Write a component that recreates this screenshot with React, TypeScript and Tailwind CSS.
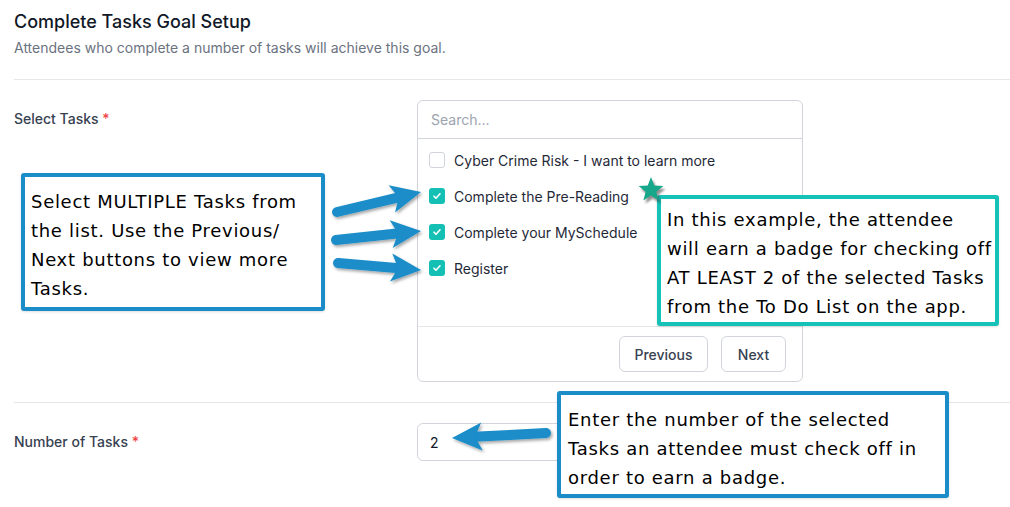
import React from "react"

type Pt = [number, number]

const tasks = [
	{ label: "Cyber Crime Risk - I want to learn more", checked: false },
	{ label: "Complete the Pre-Reading", checked: true },
	{ label: "Complete your MySchedule", checked: true },
	{ label: "Register", checked: true },
]

const arrows: { tail: Pt; tip: Pt }[] = [
	{ tail: [337, 212], tip: [421, 192] },
	{ tail: [336, 240], tip: [421, 231] },
	{ tail: [338, 263], tip: [421, 270] },
	{ tail: [546, 433], tip: [452, 438] },
]

// shaft + head for one callout arrow
const Arrow = ({ tail, tip }: { tail: Pt; tip: Pt }) => {
	const dx = tip[0] - tail[0]
	const dy = tip[1] - tail[1]
	const len = Math.hypot(dx, dy)
	const ux = dx / len
	const uy = dy / len
	const head = 26
	const half = 14
	const nx = tip[0] - ux * head
	const ny = tip[1] - uy * head
	const bx = tip[0] - ux * (head + 4)
	const by = tip[1] - uy * (head + 4)
	const pts = [
		[tip[0], tip[1]],
		[bx - uy * half, by + ux * half],
		[nx + ux * 3, ny + uy * 3],
		[bx + uy * half, by - ux * half],
	]
		.map((p) => p.join(","))
		.join(" ")
	return (
		<g>
			<line
				x1={tail[0]}
				y1={tail[1]}
				x2={nx + ux * 4}
				y2={ny + uy * 4}
				stroke="#1a8dc9"
				strokeWidth={10}
				strokeLinecap="round"
			/>
			<polygon points={pts} fill="#1a8dc9" strokeLinejoin="round" />
		</g>
	)
}

const starPoints = (cx: number, cy: number, r: number, ri: number) => {
	const out: string[] = []
	for (let i = 0; i < 10; i++) {
		const a = -Math.PI / 2 + (i * Math.PI) / 5
		const rr = i % 2 === 0 ? r : ri
		out.push(`${cx + Math.cos(a) * rr},${cy + Math.sin(a) * rr}`)
	}
	return out.join(" ")
}

const Check = ({ checked }: { checked: boolean }) =>
	checked ? (
		<span className="flex h-4 w-4 items-center justify-center rounded-[3px] bg-[#14bfb4]">
			<svg width="10" height="10" viewBox="0 0 10 10" fill="none">
				<path d="M2 5.2l2 2 4-4.4" stroke="white" strokeWidth="1.6" strokeLinecap="round" strokeLinejoin="round" />
			</svg>
		</span>
	) : (
		<span className="h-4 w-4 rounded-[3px] border border-[#d1d5db] bg-white" />
	)

const callout =
	"absolute rounded-[3px] border-4 bg-white font-[DejaVu_Sans,Verdana,sans-serif] text-[18px] tracking-[0.7px] leading-[29px] text-black shadow-sm"

export default function App() {
	return (
		<div className="relative h-[507px] w-[1010px] overflow-hidden bg-white pl-[14px] font-[Inter,sans-serif]">
			<div className="pt-2">
				<h1 className="text-[18px] leading-7 font-medium text-[#111827]">Complete Tasks Goal Setup</h1>
				<p className="mt-[2px] text-[14px] leading-5 text-[#6b7280]">
					Attendees who complete a number of tasks will achieve this goal.
				</p>
			</div>
			<div className="mt-[21px] border-t border-[#e5e7eb]" />

			<div className="flex pt-[20px]">
				<div className="w-[403px] pt-[9px] text-[14px] leading-5 font-medium text-[#374151]">
					Select Tasks <span className="text-[#ef4444]">*</span>
				</div>
				<div className="w-[386px] rounded-md border border-[#d1d5db]">
					<div className="flex h-[38px] items-center border-b border-[#d1d5db] px-[13px] text-[14px] text-[#9ca3af]">
						Search...
					</div>
					<div className="h-[188px] border-b border-[#e5e7eb] pt-[3px]">
						{tasks.map((t) => (
							<div key={t.label} className="flex h-9 items-center gap-[9px] pl-[11px] text-[14px] text-[#1f2937]">
								<Check checked={t.checked} />
								<span>{t.label}</span>
							</div>
						))}
					</div>
					<div className="flex justify-end gap-[13px] py-[9px] pr-4">
						<button className="h-9 w-[89px] rounded-md border border-[#d1d5db] bg-white text-[14px] font-medium text-[#374151]">
							Previous
						</button>
						<button className="h-9 w-[65px] rounded-md border border-[#d1d5db] bg-white text-[14px] font-medium text-[#374151]">
							Next
						</button>
					</div>
				</div>
			</div>

			<div className="mt-[20px] border-t border-[#e5e7eb]" />

			<div className="flex pt-[20px]">
				<div className="w-[403px] pt-[9px] text-[14px] leading-5 font-medium text-[#374151]">
					Number of Tasks <span className="text-[#ef4444]">*</span>
				</div>
				<div className="flex h-[38px] w-[386px] items-center rounded-md border border-[#d1d5db] px-[12px] text-[14px] text-[#111827]">
					2
				</div>
			</div>

			<svg className="pointer-events-none absolute top-0 left-0" width="1010" height="507">
				<defs>
					<filter id="sh" x="-20%" y="-40%" width="140%" height="180%">
						<feDropShadow dx="1.5" dy="2" stdDeviation="1.5" floodColor="#000" floodOpacity="0.35" />
					</filter>
				</defs>
				<g filter="url(#sh)">
					{arrows.map((a, i) => (
						<Arrow key={i} tail={a.tail} tip={a.tip} />
					))}
				</g>
			</svg>

			<div className={`${callout} top-[173px] left-[21px] w-[304px] border-[#1a8dc9] pt-[10px] pb-[4px] pl-[6px]`}>
				<div className="whitespace-nowrap">Select MULTIPLE Tasks from</div>
				<div className="whitespace-nowrap">the list. Use the Previous/</div>
				<div className="whitespace-nowrap">Next buttons to view more</div>
				<div className="whitespace-nowrap">Tasks.</div>
			</div>

			<div className={`${callout} top-[195px] left-[657px] w-[342px] border-[#16c2b8] pt-[6px] pb-[1px] pl-[6px]`}>
				<div className="whitespace-nowrap">In this example, the attendee</div>
				<div className="whitespace-nowrap">will earn a badge for checking off</div>
				<div className="whitespace-nowrap">AT LEAST 2 of the selected Tasks</div>
				<div className="whitespace-nowrap">from the To Do List on the app.</div>
			</div>

			<div className={`${callout} top-[391px] left-[557px] w-[392px] border-[#1a8dc9] pt-[10px] pb-[2px] pl-[7px]`}>
				<div className="whitespace-nowrap">Enter the number of the selected</div>
				<div className="whitespace-nowrap">Tasks an attendee must check off in</div>
				<div className="whitespace-nowrap">order to earn a badge.</div>
			</div>

			<svg className="pointer-events-none absolute top-0 left-0" width="1010" height="507">
				<polygon points={starPoints(653, 193, 13, 5.6)} fill="#333" opacity="0.55" style={{ filter: "blur(1.2px)" }} />
				<polygon points={starPoints(651, 190, 13, 5.6)} fill="#17a88c" />
			</svg>
		</div>
	)
}
